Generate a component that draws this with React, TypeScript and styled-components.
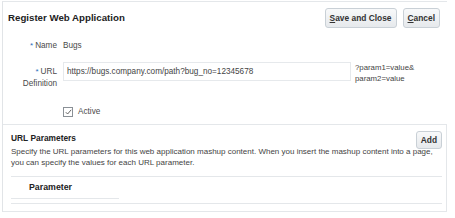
import React, { FC } from 'react';
import styled, { createGlobalStyle } from 'styled-components';

const GlobalStyle = createGlobalStyle`
  html, body {
    margin: 0;
    padding: 0;
    background: #ffffff;
  }
  body {
    font-family: "Liberation Sans", Arial, sans-serif;
    color: #333333;
  }
`;

const Page = styled.div`
  width: 455px;
  height: 218px;
  padding: 1px 0 0 2px;
  box-sizing: border-box;
  overflow: hidden;
`;

const Frame = styled.div`
  width: 445px;
  border-top: 1px solid #e4e7ea;
  border-left: 1px solid #e1e4e7;
  box-sizing: border-box;
`;

const Header = styled.div`
  display: flex;
  align-items: center;
  justify-content: space-between;
  padding: 5px 7px 0 5px;
  height: 21px;
`;

const Title = styled.h1`
  margin: 0;
  font-size: 9.7px;
  font-weight: bold;
  color: #222;
`;

const ButtonBar = styled.div`
  display: flex;
  gap: 6px;
`;

const Button = styled.button<{ $h?: number }>`
  height: ${p => p.$h ?? 20}px;
  padding: 0 4px;
  font-family: "Liberation Sans", Arial, sans-serif;
  font-size: 8.4px;
  font-weight: bold;
  color: #333;
  background: linear-gradient(#f8f9fa, #e6e9ec);
  border: 1px solid #c9d0d6;
  border-radius: 3px;
  flex-shrink: 0;
  u {
    text-decoration: underline;
  }
`;

const Form = styled.div`
  display: grid;
  grid-template-columns: 54px 1fr;
  column-gap: 6px;
  padding: 12px 0 0 0;
`;

const Label = styled.div<{ $top?: number }>`
  text-align: right;
  font-size: 8.2px;
  color: #4a4a4a;
  line-height: 12px;
  padding-top: ${p => p.$top ?? 0}px;
`;

const Star = styled.span`
  color: #2a6ebb;
  font-size: 8px;
  vertical-align: top;
  margin-right: 2px;
`;

const Value = styled.div`
  font-size: 8.2px;
  color: #4a4a4a;
  line-height: 12px;
`;

const UrlCell = styled.div`
  display: flex;
  align-items: flex-start;
  gap: 4px;
  padding-top: 10px;
`;

const UrlInput = styled.input`
  width: 288px;
  height: 19px;
  box-sizing: border-box;
  border: 1px solid #e6e9ec;
  padding: 0 3px;
  font-family: "Liberation Sans", Arial, sans-serif;
  font-size: 8.2px;
  color: #444;
  background: #fff;
  outline: none;
`;

const Hint = styled.div`
  font-size: 7.8px;
  line-height: 11px;
  color: #444;
`;

const CheckCell = styled.label`
  display: flex;
  align-items: center;
  gap: 5px;
  padding: 17px 0 7px 0;
  font-size: 8.2px;
  line-height: 10px;
  color: #4a4a4a;
`;

const CheckBox = styled.span`
  width: 8px;
  height: 8px;
  border: 1px solid #8a9096;
  display: flex;
  align-items: center;
  justify-content: center;
  background: #fff;
`;

const Params = styled.section`
  border-top: 1px solid #e4e7ea;
  border-right: 1px solid #e4e7ea;
  border-bottom: 1px solid #e4e7ea;
  padding: 6px 4px 7px 8px;
  box-sizing: border-box;
`;

const ParamsHead = styled.div`
  display: flex;
  align-items: flex-start;
  justify-content: space-between;
  height: 15px;
`;

const ParamsTitle = styled.h2`
  margin: 2px 0 0 0;
  font-size: 8.4px;
  line-height: 11px;
  font-weight: bold;
  color: #222;
`;

const Description = styled.p`
  margin: 0;
  font-size: 8px;
  line-height: 11px;
  color: #444;
  white-space: nowrap;
`;

const Table = styled.div`
  margin-top: 8px;
  border-top: 1px solid #e4e7ea;
`;

const HeaderCell = styled.div`
  width: 108px;
  padding: 5px 0 6px 18px;
  box-sizing: border-box;
  font-size: 8.8px;
  line-height: 10px;
  font-weight: bold;
  color: #222;
  border-bottom: 1px solid #e4e7ea;
`;

const TableBottom = styled.div`
  height: 4px;
  border-bottom: 1px solid #e4e7ea;
`;

const App: FC = () => {
  return (
    <Page>
      <GlobalStyle />
      <Frame>
        <Header>
          <Title>Register Web Application</Title>
          <ButtonBar>
            <Button><u>S</u>ave and Close</Button>
            <Button><u>C</u>ancel</Button>
          </ButtonBar>
        </Header>
        <Form>
          <Label><Star>*</Star>Name</Label>
          <Value>Bugs</Value>
          <Label $top={14}><Star>*</Star>URL<br />Definition</Label>
          <UrlCell>
            <UrlInput readOnly value="https://bugs.company.com/path?bug_no=12345678" />
            <Hint>?param1=value&amp;<br />param2=value</Hint>
          </UrlCell>
          <div />
          <CheckCell>
            <CheckBox>
              <svg width="7" height="6" viewBox="0 0 7 6">
                <path d="M0.8 3.2 L2.6 5 L6.2 0.8" fill="none" stroke="#555" strokeWidth="0.9" />
              </svg>
            </CheckBox>
            Active
          </CheckCell>
        </Form>
        <Params>
          <ParamsHead>
            <ParamsTitle>URL Parameters</ParamsTitle>
            <Button $h={18}>Add</Button>
          </ParamsHead>
          <Description>
            Specify the URL parameters for this web application mashup content. When you insert the mashup content into a page,
            <br />
            you can specify the values for each URL parameter.
          </Description>
          <Table>
            <HeaderCell>Parameter</HeaderCell>
            <TableBottom />
          </Table>
        </Params>
      </Frame>
    </Page>
  );
};

export default App;
